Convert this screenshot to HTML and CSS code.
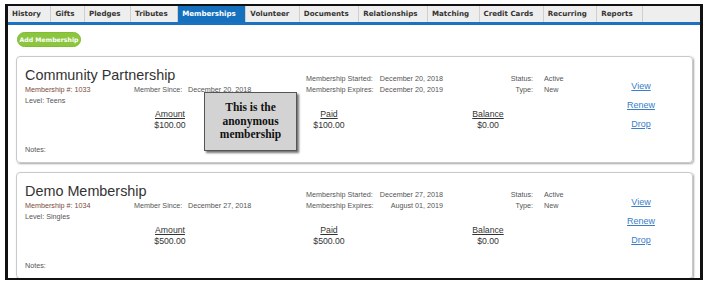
FILE: index.html
```html
<!DOCTYPE html>
<html>
<head>
<title>Memberships</title>
<link rel="stylesheet" href="styles.css">
</head>
<body>
<div class='frame'>
	<ul class='tabs'>
		<li class='tab'>History</li>
		<li class='tab'>Gifts</li>
		<li class='tab'>Pledges</li>
		<li class='tab'>Tributes</li>
		<li class='tab tab-active'>Memberships</li>
		<li class='tab'>Volunteer</li>
		<li class='tab'>Documents</li>
		<li class='tab'>Relationships</li>
		<li class='tab'>Matching</li>
		<li class='tab'>Credit Cards</li>
		<li class='tab'>Recurring</li>
		<li class='tab'>Reports</li>
	</ul>
	<div class='panel'>
		<input class='btn-add' type='button' value='Add Membership' />

		<div class='card'>
			<div class='info'>
				<div class='grid'>
					<h2 class='card-title'>Community Partnership</h2>
					<span class='label row-end'>Membership Started:</span>
					<span class='value value-right row-end'>December 20, 2018</span>
					<span class='label label-right row-end'>Status:</span>
					<span class='value value-status row-end'>Active</span>

					<span class='member-no'>Membership #: 1033</span>
					<span class='label'>Member Since:</span>
					<span class='value'>December 20, 2018</span>
					<span class='label'>Membership Expires:</span>
					<span class='value value-right'>December 20, 2019</span>
					<span class='label label-right'>Type:</span>
					<span class='value value-status'>New</span>

					<span class='level'>Level: Teens</span>
				</div>
				<div class='amounts'>
					<div class='amount'><u>Amount</u><span>$100.00</span></div>
					<div class='amount'><u>Paid</u><span>$100.00</span></div>
					<div class='amount'><u>Balance</u><span>$0.00</span></div>
				</div>
				<div class='notes'>Notes:</div>
			</div>
			<div class='links'>
				<a href='#'>View</a>
				<a href='#'>Renew</a>
				<a href='#'>Drop</a>
			</div>
			<div class='tooltip'>This is the anonymous membership</div>
		</div>

		<div class='card'>
			<div class='info'>
				<div class='grid'>
					<h2 class='card-title'>Demo Membership</h2>
					<span class='label row-end'>Membership Started:</span>
					<span class='value value-right row-end'>December 27, 2018</span>
					<span class='label label-right row-end'>Status:</span>
					<span class='value value-status row-end'>Active</span>

					<span class='member-no'>Membership #: 1034</span>
					<span class='label'>Member Since:</span>
					<span class='value'>December 27, 2018</span>
					<span class='label'>Membership Expires:</span>
					<span class='value value-right'>August 01, 2019</span>
					<span class='label label-right'>Type:</span>
					<span class='value value-status'>New</span>

					<span class='level'>Level: Singles</span>
				</div>
				<div class='amounts'>
					<div class='amount'><u>Amount</u><span>$500.00</span></div>
					<div class='amount'><u>Paid</u><span>$500.00</span></div>
					<div class='amount'><u>Balance</u><span>$0.00</span></div>
				</div>
				<div class='notes'>Notes:</div>
			</div>
			<div class='links'>
				<a href='#'>View</a>
				<a href='#'>Renew</a>
				<a href='#'>Drop</a>
			</div>
		</div>
	</div>
</div>
</body>
</html>
```

FILE: styles.css
```css
body {
	margin: 0;
	background: #fff;
	font-family: "Liberation Sans", Arial, sans-serif;
}

.frame {
	box-sizing: border-box;
	width: 698px;
	height: 276px;
	margin: 4px 0 0 5px;
	border-style: solid;
	border-color: #111;
	border-width: 2px 3px;
	overflow: hidden;
}

.tabs {
	display: flex;
	margin: 0;
	padding: 0;
	list-style: none;
	height: 16px;
	background: #eeeeee;
	border-bottom: 3px solid #1b72c0;
}
.tab {
	padding: 0 9.5px 0 4px;
	border-right: 1px solid #cfcfcf;
	font: bold 7.1px "DejaVu Sans", Verdana, sans-serif;
	line-height: 16px;
	color: #333;
}
.tab-active {
	background: #1570be;
	color: #fff;
}

.panel {
	padding: 7px 0 0 8px;
}

.btn-add {
	display: block;
	margin: 0 0 9px 1px;
	width: 64px;
	height: 15px;
	padding: 0;
	border: 1px solid #82bb34;
	border-radius: 8px;
	background: #8cc63f;
	color: #fff;
	font: bold 6.2px "DejaVu Sans", Verdana, sans-serif;
}

.card {
	position: relative;
	box-sizing: border-box;
	display: flex;
	width: 677px;
	height: 107px;
	margin-bottom: 9px;
	padding: 10px 16px 0 8px;
	border: 1px solid #c9c9c9;
	border-radius: 4px;
	box-shadow: 1px 1px 2px rgba(0,0,0,0.35);
	color: #555;
	font-size: 7.2px;
	line-height: 11px;
	white-space: nowrap;
}

.info {
	flex: 1;
}
.grid {
	display: grid;
	grid-template-columns: 109px 54px 118px 74px 63px 90px 73px;
}
.card-title {
	grid-column: 1 / 4;
	margin: 0;
	font-size: 14.4px;
	font-weight: normal;
	line-height: 17px;
	color: #333;
}
.row-end {
	align-self: end;
}
.label-right {
	text-align: right;
}
.value-right {
	justify-self: end;
}
.value-status {
	padding-left: 11px;
}
.member-no {
	color: #7a4a3a;
}
.level {
	grid-column: 1 / 4;
}

.amounts {
	display: grid;
	grid-template-columns: 100px 100px 100px;
	column-gap: 59px;
	margin: 2.5px 0 0 95px;
	font-size: 8.7px;
	color: #333;
}
.amount {
	display: flex;
	flex-direction: column;
	align-items: center;
}

.notes {
	margin-top: 13px;
}

.links {
	display: flex;
	flex-direction: column;
	align-items: center;
	width: 78px;
	padding-top: 10px;
	font-size: 9px;
	line-height: 19px;
}
.links a {
	color: #3a7dc9;
}

.tooltip {
	position: absolute;
	left: 187px;
	top: 35px;
	box-sizing: border-box;
	display: flex;
	align-items: center;
	justify-content: center;
	width: 93px;
	height: 59px;
	padding: 0 8px;
	background: #d3d3d3;
	border: 1px solid #555;
	box-shadow: 2px 2px 2px rgba(0,0,0,0.55);
	text-align: center;
	font: bold 11.5px "Liberation Serif", "Times New Roman", serif;
	line-height: 13.5px;
	color: #111;
	white-space: normal;
}
```
